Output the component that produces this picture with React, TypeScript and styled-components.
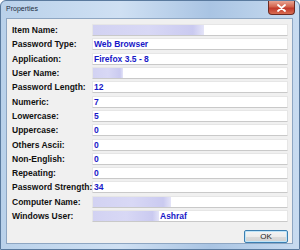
import React from 'react';
import styled, { createGlobalStyle } from 'styled-components';

type Field = {
  label: string;
  value?: string;
  /** width of the blurred (hidden) part in px */
  blur?: number;
};

const FIELDS: Field[] = [
  { label: 'Item Name:', blur: 111 },
  { label: 'Password Type:', value: 'Web Browser' },
  { label: 'Application:', value: 'Firefox 3.5 - 8' },
  { label: 'User Name:', blur: 30 },
  { label: 'Password Length:', value: '12' },
  { label: 'Numeric:', value: '7' },
  { label: 'Lowercase:', value: '5' },
  { label: 'Uppercase:', value: '0' },
  { label: 'Others Ascii:', value: '0' },
  { label: 'Non-English:', value: '0' },
  { label: 'Repeating:', value: '0' },
  { label: 'Password Strength:', value: '34' },
  { label: 'Computer Name:', blur: 78 },
  { label: 'Windows User:', blur: 66, value: 'Ashraf' },
];

function App() {
  return (
    <>
      <GlobalStyle />
      <Window>
        <TitleBar>
          <Title>Properties</Title>
          <CloseButton>
            <svg width="9" height="8" viewBox="0 0 9 8">
              <path d="M1 1 L8 7 M8 1 L1 7" stroke="#fff" strokeWidth="1.8" strokeLinecap="round" />
            </svg>
          </CloseButton>
        </TitleBar>
        <Client>
          <Rows>
            {FIELDS.map((f) => (
              <Row key={f.label}>
                <Label>{f.label}</Label>
                <ValueBox>
                  {f.blur && <Blur style={{ width: f.blur }} />}
                  {f.value && <Value>{f.value}</Value>}
                </ValueBox>
              </Row>
            ))}
          </Rows>
          <Footer>
            <OkButton>OK</OkButton>
          </Footer>
        </Client>
      </Window>
    </>
  );
}

const GlobalStyle = createGlobalStyle`
  html, body {
    margin: 0;
    padding: 0;
    width: 300px;
    height: 250px;
    overflow: hidden;
    background: #ffffff;
  }
`;
const Window = styled.div`
  box-sizing: border-box;
  display: flex;
  flex-direction: column;
  width: 300px;
  height: 250px;
  border: 1px solid #5a7a9e;
  border-radius: 6px 6px 0 0;
  background: linear-gradient(90deg, #b9d1ea 0%, #cfe0f3 40%, #a9c4e3 70%, #c8dbf0 100%);
  font-family: 'Liberation Sans', Arial, sans-serif;
`;
const TitleBar = styled.div`
  display: flex;
  justify-content: space-between;
  align-items: flex-start;
  height: 19px;
  padding-left: 5px;
  padding-right: 4px;
`;
const Title = styled.div`
  margin-top: 4px;
  font-size: 7px;
  color: #1b2b3d;
`;
const CloseButton = styled.div`
  display: flex;
  align-items: center;
  justify-content: center;
  width: 27px;
  height: 14px;
  border: 1px solid #6b2a22;
  border-top: none;
  border-radius: 0 0 4px 4px;
  background: linear-gradient(180deg, #e8a493 0%, #d2624c 45%, #c0382a 55%, #d96d52 100%);
  box-sizing: border-box;
`;
const Client = styled.div`
  flex: 1;
  display: flex;
  flex-direction: column;
  margin: 0 6px 5px 5px;
  padding: 5px 4px 0 5px;
  background: #f0f0f0;
  border: 1px solid #8ea6c2;
`;
const Rows = styled.div`
  display: flex;
  flex-direction: column;
  gap: 2.3px;
`;
const Row = styled.div`
  display: grid;
  grid-template-columns: 80px 1fr;
  align-items: center;
  height: 12px;
`;
const Label = styled.div`
  font-size: 8.5px;
  font-weight: bold;
  color: #111;
  white-space: nowrap;
`;
const ValueBox = styled.div`
  position: relative;
  display: flex;
  align-items: center;
  box-sizing: border-box;
  height: 12px;
  background: #ffffff;
  border: 1px solid #e6e6e6;
  border-bottom-color: #c9c9c9;
  border-radius: 1px;
  overflow: hidden;
`;
const Blur = styled.span`
  flex: none;
  align-self: stretch;
  background: linear-gradient(90deg, #d2d2f2 0%, #d8d8f5 50%, #cacaf0 90%, #e4e4f8 100%);
  filter: blur(0.6px);
`;
const Value = styled.span`
  padding-left: 1px;
  font-size: 8.5px;
  font-weight: bold;
  color: #1818c8;
  white-space: nowrap;
`;
const Footer = styled.div`
  display: flex;
  justify-content: flex-end;
  margin-top: 8px;
`;
const OkButton = styled.div`
  display: flex;
  align-items: center;
  justify-content: center;
  box-sizing: border-box;
  width: 44px;
  height: 13px;
  border: 1px solid #3c7fb1;
  border-radius: 2px;
  background: linear-gradient(180deg, #f4f4f4 0%, #ececec 50%, #dcdcdc 51%, #d2d2d2 100%);
  box-shadow: inset 0 0 0 1px #bfe4f8;
  font-size: 8px;
  color: #222;
`;

export default App;
